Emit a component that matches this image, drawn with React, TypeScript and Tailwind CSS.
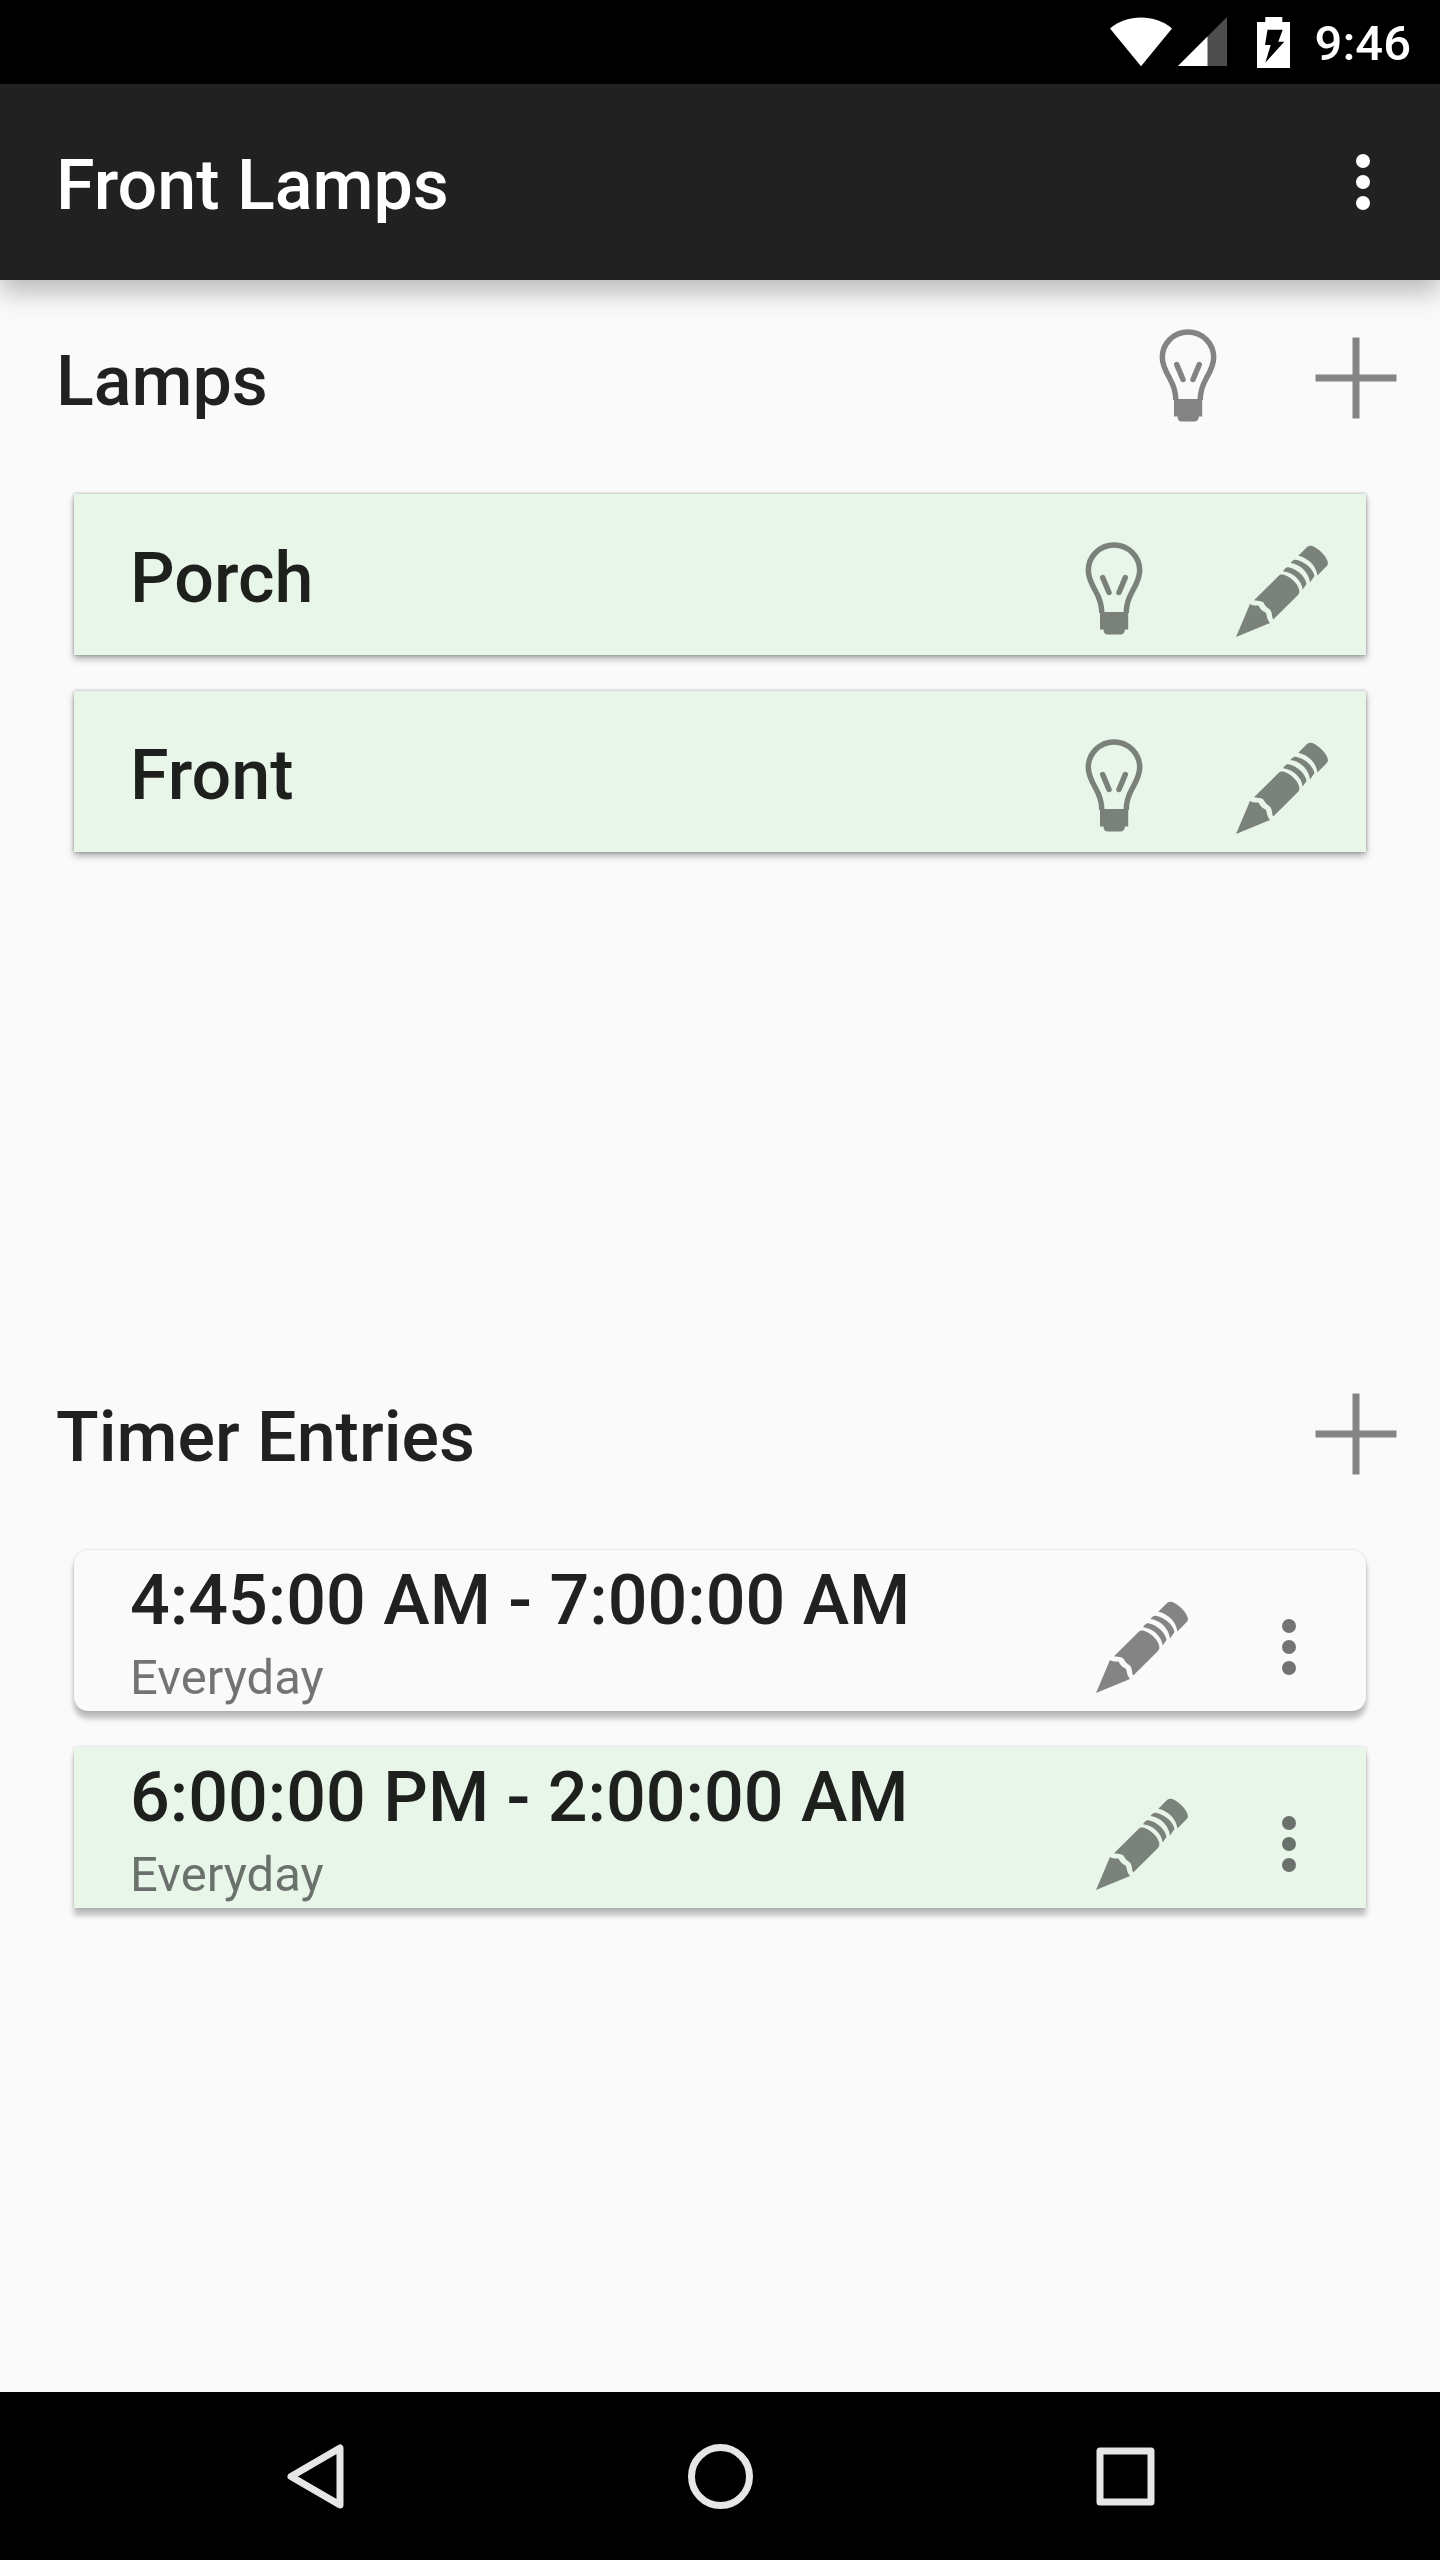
import React from "react";

function StatusBar() {
  return (
    <div className="flex h-[84px] items-center justify-end bg-black pr-[29px] text-white">
      <svg className="h-[50px] w-[62px]" viewBox="0 0 62 50" fill="currentColor" role="img" aria-label="Wi-Fi">
        <path d="M31 49.3 0 11.5C9 4 19.500 .5 31 .5S53 4 62 11.500Z" />
      </svg>
      <svg className="ml-[6px] h-[50px] w-[50px]" viewBox="0 0 50 50" fill="currentColor" role="img" aria-label="Signal">
        <path d="M49 0V49H0Z" fillOpacity=".3" />
        <path d="M29.500 19.500V49H0Z" />
      </svg>
      <svg className="ml-[29px] h-[51px] w-[33px]" viewBox="0 0 33 51" fill="currentColor" role="img" aria-label="Battery charging">
        <path
          fillRule="evenodd"
          d="M8.300 0h17v5H33v46H0V5h8.300ZM10.500 12.700 8 28h5.700L8.300 45.700 27.300 24.700h-6L25.700 12.700Z"
        />
      </svg>
      <time className="ml-[25px] pt-[2px] text-[49px] leading-[57px] font-medium">9:46</time>
    </div>
  );
}

function BulbIcon() {
  return (
    <svg className="size-[98px]" viewBox="0 0 98 98" fill="none" aria-hidden="true">
      <g className="opacity-[0.47]" stroke="#000" strokeWidth="5.5">
        <path d="M36.800 71C36.800 63 34.500 56 30.500 49C26.500 42 23.300 36 23.300 28.500C23.300 14.500 34.700 3 49 3S74.700 14.500 74.700 28.500C74.700 36 71.500 42 67.500 49C63.500 56 61.200 63 61.200 71" />
        <path d="M37.700 35.500 44 50.500M60.300 35.500 54 50.500" strokeLinecap="round" />
        <path d="M35 70H63.200V87.500H60C59.500 91 58 92.600 55.500 92.600H42.500C40 92.600 38.700 91 38.500 87.500H35Z" fill="#000" stroke="none" />
      </g>
    </svg>
  );
}

function PencilIcon() {
  return (
    <svg className="size-[98px]" viewBox="0 0 98 98" fill="#000" fillOpacity=".47" aria-hidden="true">
      <path d="M3 95 17 62C20 64 23 63.500 25.500 63.500C26.500 66 28.500 68.500 32.500 70.500C34.500 73 33 76 37 81Z" />
      <path d="M21 58.300 45.500 34C48 31.500 51 32.500 54 34C60 37.500 64.500 42 66 47C66.700 50 66.500 51.500 64.500 53.500L40.300 77.500C38.500 75 39.500 71.500 37.700 68.500C36 66 33 65.500 31.500 62.500C30.500 58.500 26 59.500 21 58.300Z" />
      <path d="M50 29.200C51.500 27 53 25 55.500 25.300C65 27.500 72.500 35 73.500 42L69.700 47.500C68.500 38 60 30.500 50 29.200Z" />
      <path d="M57.500 21C59 19 60.500 17.500 63 17.800C72.500 20 80 27 81.500 34L77 40.500C76 31 67.500 22 57.500 21Z" />
      <path d="M65.300 13.700 73.500 5.500C75.500 3.500 78.500 3.300 81.500 5C88 9 92.500 13.500 94.500 19C95.200 21.500 95 22.700 93.500 24.300L84.500 33.500C83 23.500 75.500 16 65.300 13.700Z" />
    </svg>
  );
}

function PlusIcon() {
  return (
    <svg className="size-[98px]" viewBox="0 0 98 98" aria-hidden="true">
      <path d="M8.500 49H89.500M49 8.500V89.500" stroke="#000" strokeOpacity=".47" strokeWidth="7" />
    </svg>
  );
}

function MoreIcon() {
  return (
    <svg className="h-[56px] w-[14px]" viewBox="0 0 14 56" fill="currentColor" aria-hidden="true">
      <circle cx="7" cy="7" r="7" />
      <circle cx="7" cy="28" r="7" />
      <circle cx="7" cy="49" r="7" />
    </svg>
  );
}

type IconButtonProps = { label: string; size: string; children: React.ReactNode };

function IconButton({ label, size, children }: IconButtonProps) {
  return (
    <button type="button" aria-label={label} className={"flex shrink-0 items-center justify-center " + size}>
      {children}
    </button>
  );
}

function SectionHeader({ title, children }: { title: string; children: React.ReactNode }) {
  return (
    <div className="flex h-[196px] items-center pl-14">
      <h2 className="flex-1 pt-[6px] text-[70px] leading-[82px] font-medium text-black/87">{title}</h2>
      {children}
    </div>
  );
}

function LampRow({ name }: { name: string }) {
  return (
    <li className="flex min-h-[161px] items-end bg-[#e8f5e9] pl-14 shadow-[0_0_3px_rgba(0,0,0,0.3),0_4px_7px_rgba(0,0,0,0.3)]">
      <h3 className="flex-1 self-center pt-[6px] text-[70px] leading-[82px] font-medium text-black/87">{name}</h3>
      <IconButton label={"Toggle " + name} size="h-32 w-[168px]">
        <BulbIcon />
      </IconButton>
      <IconButton label={"Edit " + name} size="h-32 w-[168px]">
        <PencilIcon />
      </IconButton>
    </li>
  );
}

function TimerRow({ range, days, active }: { range: string; days: string; active: boolean }) {
  return (
    <li
      className={
        "flex min-h-[161px] items-end pl-14 shadow-[0_0_2px_rgba(0,0,0,0.15),0_8px_5px_rgba(0,0,0,0.2),0_3px_7px_rgba(0,0,0,0.1)] " +
        (active ? "bg-[#e8f5e9]" : "rounded-[14px] bg-[#fafafa]")
      }
    >
      <div className="flex-1 self-start pt-[9px]">
        <h3 className="text-[70px] leading-[82px] font-medium text-black/87">{range}</h3>
        <p className="mt-2 text-[49px] leading-[57px] text-black/54">{days}</p>
      </div>
      <IconButton label={"Edit " + range} size="h-32 w-[140px]">
        <PencilIcon />
      </IconButton>
      <IconButton label={"More options for " + range} size="h-32 w-[154px] text-black/54">
        <MoreIcon />
      </IconButton>
    </li>
  );
}

function NavigationBar() {
  return (
    <nav className="flex h-[168px] items-center justify-center gap-[237px] bg-black">
      <IconButton label="Back" size="size-[168px]">
        <svg className="size-[72px]" viewBox="0 0 72 72" fill="none" stroke="#e6e6e6" strokeWidth="7" strokeLinejoin="round" aria-hidden="true">
          <path d="M61 8V65L12 36.500Z" />
        </svg>
      </IconButton>
      <IconButton label="Home" size="size-[168px]">
        <svg className="size-[72px]" viewBox="0 0 72 72" fill="none" stroke="#e6e6e6" strokeWidth="7" aria-hidden="true">
          <circle cx="36.500" cy="36.500" r="29" />
        </svg>
      </IconButton>
      <IconButton label="Recent apps" size="size-[168px]">
        <svg className="size-[72px]" viewBox="0 0 72 72" fill="none" stroke="#e6e6e6" strokeWidth="7" strokeLinejoin="round" aria-hidden="true">
          <rect x="11" y="11" width="51" height="51" />
        </svg>
      </IconButton>
    </nav>
  );
}

export default function App() {
  return (
    <div className="flex min-h-screen flex-col bg-[#fafafa] font-[Roboto,sans-serif]">
      <StatusBar />
      <header className="relative z-10 flex h-[196px] items-center bg-[#212121] pl-14 text-white shadow-[0_12px_24px_rgba(0,0,0,0.26)]">
        <h1 className="flex-1 pt-[6px] text-[70px] leading-[82px] font-medium">Front Lamps</h1>
        <IconButton label="More options" size="h-[168px] w-[154px]">
          <MoreIcon />
        </IconButton>
      </header>
      <main className="flex flex-1 flex-col">
        <section className="flex-1">
          <SectionHeader title="Lamps">
            <IconButton label="Toggle all lamps" size="size-[168px]">
              <BulbIcon />
            </IconButton>
            <IconButton label="Add lamp" size="size-[168px]">
              <PlusIcon />
            </IconButton>
          </SectionHeader>
          <ul className="flex flex-col gap-9 px-[74px] pt-[18px]">
            <LampRow name="Porch" />
            <LampRow name="Front" />
          </ul>
        </section>
        <section className="flex-1">
          <SectionHeader title="Timer Entries">
            <IconButton label="Add timer entry" size="size-[168px]">
              <PlusIcon />
            </IconButton>
          </SectionHeader>
          <ul className="flex flex-col gap-9 px-[74px] pt-[18px]">
            <TimerRow range="4:45:00 AM - 7:00:00 AM" days="Everyday" active={false} />
            <TimerRow range="6:00:00 PM - 2:00:00 AM" days="Everyday" active />
          </ul>
        </section>
      </main>
      <NavigationBar />
    </div>
  );
}
